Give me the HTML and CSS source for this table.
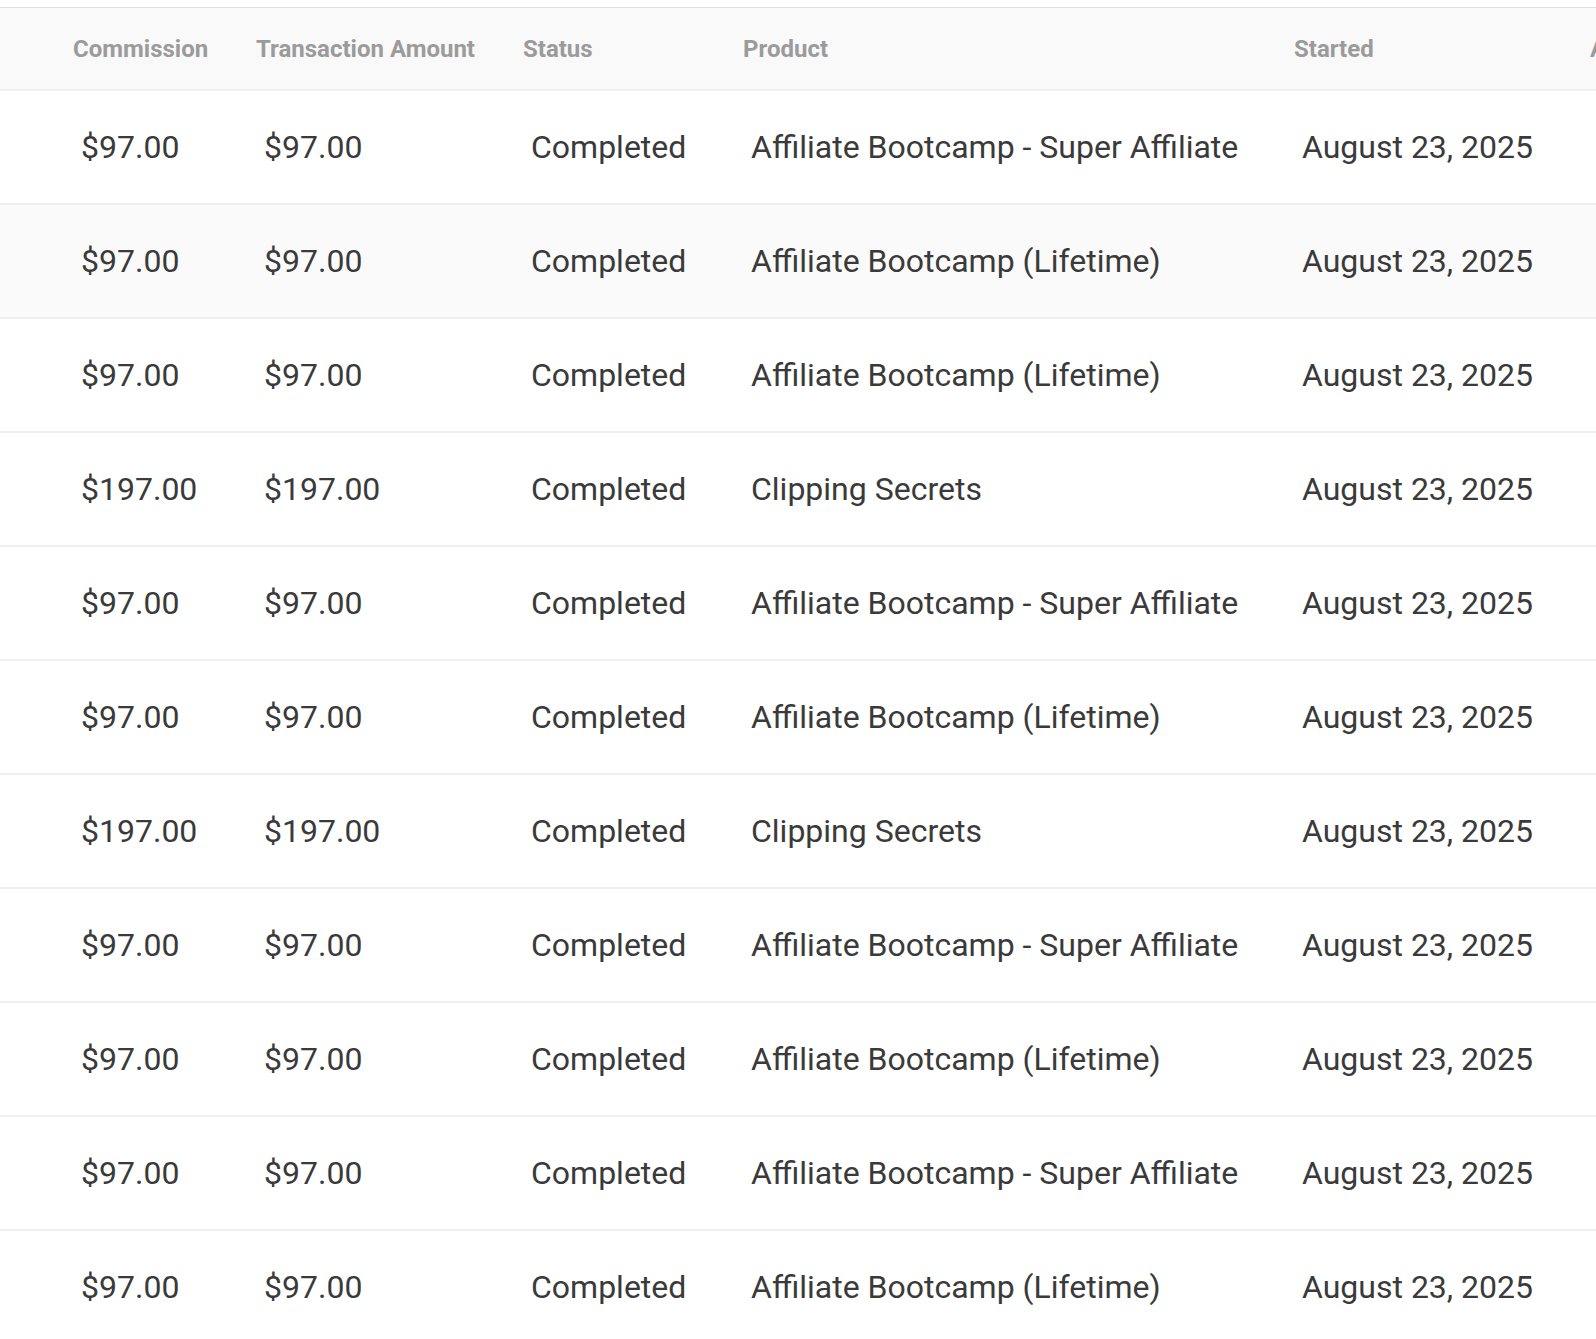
FILE: index.html
```html
<!DOCTYPE html>
<html lang="en">
<head>
<meta charset="utf-8">
<title>Transactions</title>
<link rel="stylesheet" href="styles.css">
</head>
<body>
<div class="table-wrap">
  <div class="table">
    <div class="row head">
      <div class="cell">Commission</div>
      <div class="cell">Transaction Amount</div>
      <div class="cell">Status</div>
      <div class="cell">Product</div>
      <div class="cell">Started</div>
      <div class="cell">Actions</div>
    </div>
    <div class="row">
      <div class="cell">$97.00</div><div class="cell">$97.00</div><div class="cell">Completed</div>
      <div class="cell">Affiliate Bootcamp - Super Affiliate</div><div class="cell">August 23, 2025</div><div class="cell"></div>
    </div>
    <div class="row hover">
      <div class="cell">$97.00</div><div class="cell">$97.00</div><div class="cell">Completed</div>
      <div class="cell">Affiliate Bootcamp (Lifetime)</div><div class="cell">August 23, 2025</div><div class="cell"></div>
    </div>
    <div class="row">
      <div class="cell">$97.00</div><div class="cell">$97.00</div><div class="cell">Completed</div>
      <div class="cell">Affiliate Bootcamp (Lifetime)</div><div class="cell">August 23, 2025</div><div class="cell"></div>
    </div>
    <div class="row">
      <div class="cell">$197.00</div><div class="cell">$197.00</div><div class="cell">Completed</div>
      <div class="cell">Clipping Secrets</div><div class="cell">August 23, 2025</div><div class="cell"></div>
    </div>
    <div class="row">
      <div class="cell">$97.00</div><div class="cell">$97.00</div><div class="cell">Completed</div>
      <div class="cell">Affiliate Bootcamp - Super Affiliate</div><div class="cell">August 23, 2025</div><div class="cell"></div>
    </div>
    <div class="row">
      <div class="cell">$97.00</div><div class="cell">$97.00</div><div class="cell">Completed</div>
      <div class="cell">Affiliate Bootcamp (Lifetime)</div><div class="cell">August 23, 2025</div><div class="cell"></div>
    </div>
    <div class="row">
      <div class="cell">$197.00</div><div class="cell">$197.00</div><div class="cell">Completed</div>
      <div class="cell">Clipping Secrets</div><div class="cell">August 23, 2025</div><div class="cell"></div>
    </div>
    <div class="row">
      <div class="cell">$97.00</div><div class="cell">$97.00</div><div class="cell">Completed</div>
      <div class="cell">Affiliate Bootcamp - Super Affiliate</div><div class="cell">August 23, 2025</div><div class="cell"></div>
    </div>
    <div class="row">
      <div class="cell">$97.00</div><div class="cell">$97.00</div><div class="cell">Completed</div>
      <div class="cell">Affiliate Bootcamp (Lifetime)</div><div class="cell">August 23, 2025</div><div class="cell"></div>
    </div>
    <div class="row">
      <div class="cell">$97.00</div><div class="cell">$97.00</div><div class="cell">Completed</div>
      <div class="cell">Affiliate Bootcamp - Super Affiliate</div><div class="cell">August 23, 2025</div><div class="cell"></div>
    </div>
    <div class="row">
      <div class="cell">$97.00</div><div class="cell">$97.00</div><div class="cell">Completed</div>
      <div class="cell">Affiliate Bootcamp (Lifetime)</div><div class="cell">August 23, 2025</div><div class="cell"></div>
    </div>
  </div>
</div>
</body>
</html>
```
FILE: styles.css
```css
html, body {
  margin: 0;
  padding: 0;
  background: #ffffff;
  overflow: hidden;
}

body {
  font-family: Roboto, "Liberation Sans", Arial, sans-serif;
}

.table-wrap {
  width: 1596px;
  height: 1339px;
  overflow: hidden;
  padding-top: 7px;
  box-sizing: border-box;
}

.table {
  width: 1774px;
  border-top: 1px solid #dedede;
}

.row {
  display: grid;
  grid-template-columns: 240px 267px 220px 551px 296px 200px;
  height: 112px;
  align-items: center;
  border-bottom: 2px solid #efefef;
  font-size: 32px;
  color: #3a3a3a;
}

.row .cell {
  padding: 0 16px 0 24px;
  white-space: nowrap;
}

.row .cell:first-child {
  padding-left: 81px;
}

.row.head {
  height: 81px;
  background: #f9f9f9;
  font-size: 24px;
  font-weight: 700;
  color: #9b9b9b;
}

.row.head .cell {
  padding-left: 16px;
}

.row.head .cell:first-child {
  padding-left: 73px;
}

.row.hover {
  background: #fafafa;
}
```
